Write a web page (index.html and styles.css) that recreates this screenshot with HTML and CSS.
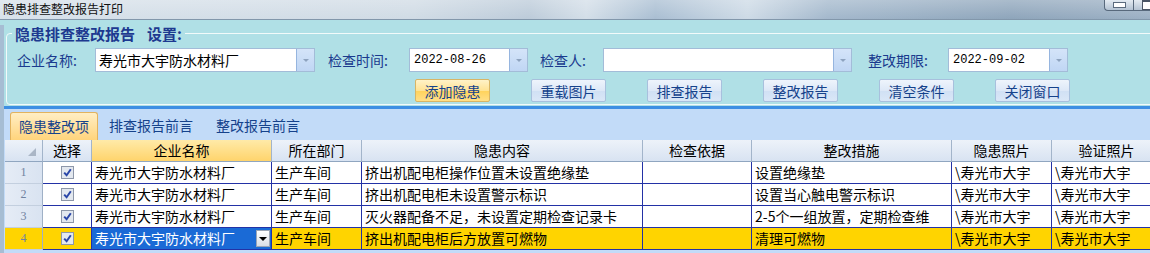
FILE: index.html
```html
<!DOCTYPE html>
<html lang="zh">
<head>
<meta charset="utf-8">
<title>隐患排查整改报告打印</title>
<link rel="stylesheet" href="styles.css">
</head>
<body>
<div class="titlebar">
  <span class="title">隐患排查整改报告打印</span>
  <div class="winbtns"><span class="wb min"></span><span class="wb max"></span></div>
</div>
<div class="window">
  <fieldset class="settings">
    <legend><span>隐患排查整改报告</span><span class="lg2">设置:</span></legend>
    <div class="row1">
      <span class="lbl l1">企业名称:</span>
      <div class="combo c1"><span class="val">寿光市大宇防水材料厂</span><span class="dd"></span></div>
      <span class="lbl l2">检查时间:</span>
      <div class="combo d1"><span class="val date">2022-08-26</span><span class="dd"></span></div>
      <span class="lbl l3">检查人:</span>
      <div class="combo c3"><span class="val"></span><span class="dd"></span></div>
      <span class="lbl l4">整改期限:</span>
      <div class="combo d2"><span class="val date">2022-09-02</span><span class="dd"></span></div>
    </div>
    <div class="row2">
      <span class="btn default">添加隐患</span>
      <span class="btn">重载图片</span>
      <span class="btn">排查报告</span>
      <span class="btn">整改报告</span>
      <span class="btn">清空条件</span>
      <span class="btn">关闭窗口</span>
    </div>
  </fieldset>
  <div class="tabctl">
    <div class="tabhead">
      <span class="tab active">隐患整改项</span>
      <span class="tab">排查报告前言</span>
      <span class="tab">整改报告前言</span>
    </div>
    <div class="grid">
      <div class="h corner"><svg width="8" height="8" viewBox="0 0 8 8"><polygon points="8,0 8,8 0,8" fill="#aab6c6"/></svg></div>
      <div class="h">选择</div>
      <div class="h hot">企业名称</div>
      <div class="h">所在部门</div>
      <div class="h">隐患内容</div>
      <div class="h">检查依据</div>
      <div class="h">整改措施</div>
      <div class="h">隐患照片</div>
      <div class="h">验证照片</div>

      <div class="rh">1</div>
      <div class="c chk"><svg width="13" height="13" viewBox="0 0 13 13"><rect x="0.5" y="0.5" width="12" height="12" fill="#e3e8ef" stroke="#8d97a9"/><path d="M3.2 6.6 L5.6 9.2 L9.8 3.2" fill="none" stroke="#2a46a8" stroke-width="2"/></svg></div>
      <div class="c">寿光市大宇防水材料厂</div>
      <div class="c">生产车间</div>
      <div class="c">挤出机配电柜操作位置未设置绝缘垫</div>
      <div class="c"></div>
      <div class="c">设置绝缘垫</div>
      <div class="c">\寿光市大宇</div>
      <div class="c">\寿光市大宇</div>

      <div class="rh">2</div>
      <div class="c chk"><svg width="13" height="13" viewBox="0 0 13 13"><rect x="0.5" y="0.5" width="12" height="12" fill="#e3e8ef" stroke="#8d97a9"/><path d="M3.2 6.6 L5.6 9.2 L9.8 3.2" fill="none" stroke="#2a46a8" stroke-width="2"/></svg></div>
      <div class="c">寿光市大宇防水材料厂</div>
      <div class="c">生产车间</div>
      <div class="c">挤出机配电柜未设置警示标识</div>
      <div class="c"></div>
      <div class="c">设置当心触电警示标识</div>
      <div class="c">\寿光市大宇</div>
      <div class="c">\寿光市大宇</div>

      <div class="rh">3</div>
      <div class="c chk"><svg width="13" height="13" viewBox="0 0 13 13"><rect x="0.5" y="0.5" width="12" height="12" fill="#e3e8ef" stroke="#8d97a9"/><path d="M3.2 6.6 L5.6 9.2 L9.8 3.2" fill="none" stroke="#2a46a8" stroke-width="2"/></svg></div>
      <div class="c">寿光市大宇防水材料厂</div>
      <div class="c">生产车间</div>
      <div class="c">灭火器配备不足，未设置定期检查记录卡</div>
      <div class="c"></div>
      <div class="c">2-5个一组放置，定期检查维</div>
      <div class="c">\寿光市大宇</div>
      <div class="c">\寿光市大宇</div>

      <div class="rh sel">4</div>
      <div class="c chk sel"><svg width="13" height="13" viewBox="0 0 13 13"><rect x="0.5" y="0.5" width="12" height="12" fill="#e3e8ef" stroke="#8d97a9"/><path d="M3.2 6.6 L5.6 9.2 L9.8 3.2" fill="none" stroke="#2a46a8" stroke-width="2"/></svg></div>
      <div class="c edit"><span class="etext">寿光市大宇防水材料厂</span><span class="edd"></span></div>
      <div class="c sel">生产车间</div>
      <div class="c sel">挤出机配电柜后方放置可燃物</div>
      <div class="c sel"></div>
      <div class="c sel">清理可燃物</div>
      <div class="c sel">\寿光市大宇</div>
      <div class="c sel">\寿光市大宇</div>
    </div>
  </div>
</div>
</body>
</html>
```

FILE: styles.css
```css
* { box-sizing: border-box; }
html, body { margin: 0; padding: 0; }
body {
  width: 1150px;
  height: 253px;
  overflow: hidden;
  background: #b0e0e6;
  font-family: "Noto Sans CJK SC", "Noto Sans", sans-serif;
}

/* title bar */
.titlebar {
  height: 20px;
  display: flex;
  align-items: flex-start;
  border-bottom: 1px solid #8297ab;
  background:
    linear-gradient(rgba(255,255,255,0.25), rgba(255,255,255,0)),
    linear-gradient(to right, #d7e1ea 0%, #d0dbe5 36%, #bccbd9 46%, #d3dee8 51%, #a9bed2 57%, #cddae6 65%, #a3b8cc 72%, #8ea5bb 88%, #9cb0c4 100%);
}
.title {
  font-size: 12px;
  line-height: 17px;
  padding-left: 3px;
  color: #111;
}
.winbtns {
  margin-left: auto;
  margin-right: -12px;
  display: flex;
}
.wb {
  width: 29px;
  height: 11px;
  border: 1px solid #58697c;
  border-top: none;
  background: linear-gradient(#e4ebf2, #b4c3d3);
  display: flex;
  align-items: center;
  justify-content: center;
}
.wb.min { border-radius: 0 0 0 4px; border-right: none; }
.wb.min::after {
  content: "";
  width: 11px;
  height: 4px;
  background: #fff;
  border: 1px solid #5b6b7e;
}
.wb.max::after {
  content: "";
  width: 9px;
  height: 7px;
  background: #fff;
  border: 1px solid #4a5566;
  border-top-width: 2px;
}

/* window */
.window {
  border-left: 4px solid #a6bdd3;
  height: 233px;
}

.settings {
  margin: 5px -20px 0 2px;
  padding: 6px 0 2px 0;
  border: 1px solid #f2fafa;
  border-radius: 4px;
  min-width: 0;
}
.settings legend {
  margin-left: 5px;
  padding: 0 3px;
  font-size: 15px;
  font-weight: bold;
  line-height: 17px;
  color: #1d3990;
}
.settings legend .lg2 { margin-left: 12px; }

.row1 {
  display: flex;
  align-items: center;
  height: 24px;
  padding-left: 10px;
}
.lbl {
  font-size: 14px;
  line-height: 20px;
  color: #1a3a8e;
  white-space: nowrap;
}
.l1 { width: 78px; }
.l2 { width: 81px; margin-left: 13px; }
.l3 { width: 63px; margin-left: 12px; }
.l4 { width: 80px; margin-left: 16px; }

.combo {
  height: 24px;
  display: flex;
  border: 1px solid #a3bcd8;
  background: #fff;
}
.c1 { width: 220px; }
.d1 { width: 119px; }
.c3 { width: 249px; }
.d2 { width: 120px; }
.combo .val {
  flex: 1;
  padding-left: 3px;
  font-size: 14px;
  line-height: 22px;
  color: #000;
  overflow: hidden;
  white-space: nowrap;
}
.combo .val.date {
  font-family: "Liberation Mono", monospace;
  font-size: 12px;
  padding-left: 4px;
}
.dd {
  width: 18px;
  border-left: 1px solid #96b5df;
  background: linear-gradient(#d4e4f9, #c0d6f4);
  display: flex;
  align-items: center;
  justify-content: center;
}
.dd::after {
  content: "";
  border-left: 3px solid transparent;
  border-right: 3px solid transparent;
  border-top: 3px solid #8ea3bf;
}

.row2 {
  display: flex;
  gap: 41px;
  margin: 7px 0 0 408px;
  height: 23px;
}
.btn {
  width: 75px;
  height: 23px;
  border: 1px solid #a8c0dd;
  border-radius: 2px;
  background: linear-gradient(#eef4fc 0%, #dde8f7 50%, #d0e0f4 51%, #dae7f7 100%);
  font-size: 14px;
  color: #15428b;
  display: flex;
  align-items: center;
  justify-content: center;
  white-space: nowrap;
}
.btn.default {
  background: linear-gradient(#fff2c8 0%, #ffe394 50%, #ffd25a 51%, #ffdf88 100%);
  border-color: #d8b565;
}

/* tabs */
.tabctl {
  margin-top: 1px;
  border-top: 3px solid #3d8fe3;
  background: #c2dbf8;
  height: 147px;
}
.tabhead {
  height: 31px;
  display: flex;
  align-items: flex-end;
  padding-left: 6px;
}
.tab {
  height: 28px;
  font-size: 14px;
  line-height: 26px;
  color: #15428b;
  padding: 0 12px 0 11px;
  white-space: nowrap;
}
.tab.active {
  padding: 0 8px;
  border: 1px solid #e2b35e;
  border-bottom: none;
  border-radius: 3px 3px 0 0;
  background: linear-gradient(#ffeec4, #ffd47c);
}

/* grid */
.grid {
  margin-left: 1px;
  display: grid;
  grid-template-columns: 38px 49px 180px 90px 281px 109px 200px 100px 110px;
  grid-auto-rows: 22px;
  width: 1157px;
  font-size: 14px;
}
.h {
  background: linear-gradient(#edf2f9, #d8e3f2);
  border-right: 1px solid #a2b4ca;
  border-bottom: 1px solid #90a6c0;
  text-align: center;
  line-height: 21px;
  color: #000;
  white-space: nowrap;
  overflow: hidden;
}
.h.hot { background: linear-gradient(#ffeaa8, #ffd46c); }
.h.corner {
  display: flex;
  justify-content: flex-end;
  align-items: flex-end;
  padding: 0 6px 5px 0;
}
.rh {
  background: linear-gradient(to right, #e5ecf6, #d9e3f1);
  border-right: 1px solid #9fb0c6;
  border-bottom: 1px solid #c3cfdf;
  text-align: center;
  font-family: "Liberation Serif", serif;
  font-size: 12px;
  line-height: 21px;
  color: #7082a0;
}
.rh.sel { background: #ffd400; }
.c {
  background: #fff;
  border-right: 1px solid #2332a6;
  border-bottom: 1px solid #2332a6;
  padding-left: 3px;
  line-height: 21px;
  color: #000;
  white-space: nowrap;
  overflow: hidden;
}
.c.sel { background: #ffd400; }
.c.chk {
  display: flex;
  align-items: center;
  justify-content: center;
  padding-left: 0;
}
.c.edit {
  background: #1a6ad6;
  color: #fff;
  display: flex;
  align-items: center;
}
.etext { flex: 1; overflow: hidden; }
.edd {
  width: 14px;
  height: 17px;
  margin-right: 1px;
  border: 1px solid #9aa5b6;
  background: linear-gradient(#ffffff, #d9dee6);
  display: flex;
  align-items: center;
  justify-content: center;
}
.edd::after {
  content: "";
  border-left: 4px solid transparent;
  border-right: 4px solid transparent;
  border-top: 4px solid #000;
}
```
